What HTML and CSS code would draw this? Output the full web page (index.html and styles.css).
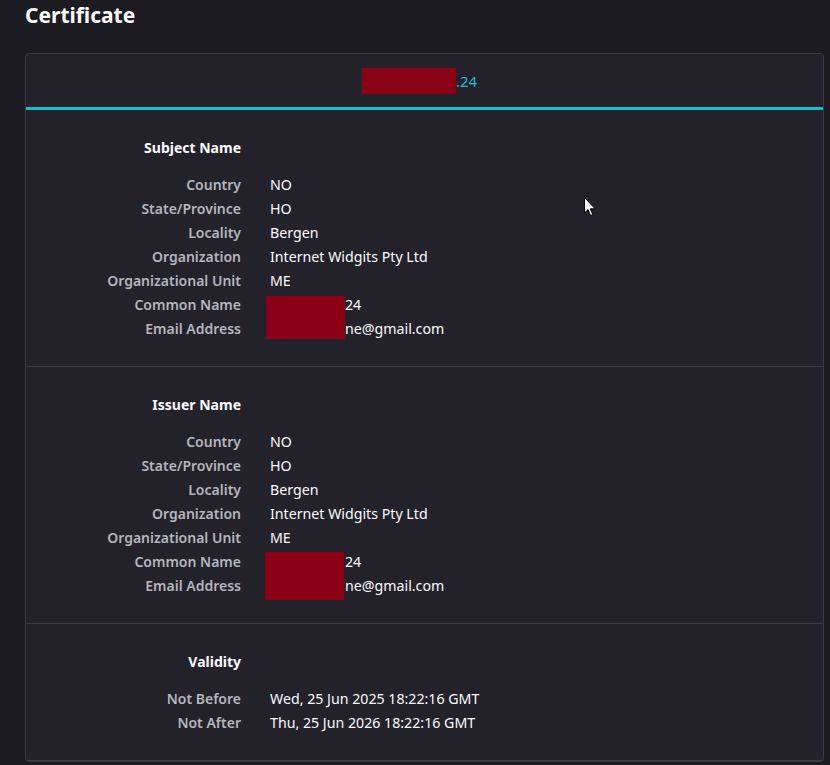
FILE: index.html
```html
<!DOCTYPE html>
<html lang="en">
<head>
<meta charset="utf-8">
<title>Certificate</title>
<link rel="stylesheet" href="styles.css">
</head>
<body>
<h1 class="title">Certificate</h1>
<div class="card">
  <div class="card-header">
    <span class="tab"><span class="redact-inline"></span>.24</span>
  </div>

  <section class="section">
    <h2 class="sec-title">Subject Name</h2>
    <div class="rows">
      <div class="label">Country</div><div class="value">NO</div>
      <div class="label">State/Province</div><div class="value">HO</div>
      <div class="label">Locality</div><div class="value">Bergen</div>
      <div class="label">Organization</div><div class="value">Internet Widgits Pty Ltd</div>
      <div class="label">Organizational Unit</div><div class="value">ME</div>
      <div class="label">Common Name</div><div class="value redacted-val"><span class="hidden-part"></span>24<span class="redact-box"></span></div>
      <div class="label">Email Address</div><div class="value"><span class="hidden-part"></span>ne@gmail.com</div>
    </div>
  </section>

  <section class="section">
    <h2 class="sec-title">Issuer Name</h2>
    <div class="rows">
      <div class="label">Country</div><div class="value">NO</div>
      <div class="label">State/Province</div><div class="value">HO</div>
      <div class="label">Locality</div><div class="value">Bergen</div>
      <div class="label">Organization</div><div class="value">Internet Widgits Pty Ltd</div>
      <div class="label">Organizational Unit</div><div class="value">ME</div>
      <div class="label">Common Name</div><div class="value redacted-val"><span class="hidden-part"></span>24<span class="redact-box tall"></span></div>
      <div class="label">Email Address</div><div class="value"><span class="hidden-part"></span>ne@gmail.com</div>
    </div>
  </section>

  <section class="section">
    <h2 class="sec-title">Validity</h2>
    <div class="rows">
      <div class="label">Not Before</div><div class="value">Wed, 25 Jun 2025 18:22:16 GMT</div>
      <div class="label">Not After</div><div class="value">Thu, 25 Jun 2026 18:22:16 GMT</div>
    </div>
  </section>
</div>

<svg class="cursor" width="13" height="20" viewBox="0 0 13 20" aria-hidden="true">
  <path d="M0.5 0.5 L0.5 16 L4 12.6 L6.6 18.6 L8.8 17.6 L6.3 11.8 L11.2 11.8 Z" fill="#ffffff" stroke="#000000" stroke-width="1"/>
</svg>
</body>
</html>
```

FILE: styles.css
```css
html, body {
  margin: 0;
  padding: 0;
  background: #1c1b22;
}
body {
  font-family: "Noto Sans", "Open Sans", sans-serif;
  color: #fbfbfe;
  padding: 0 6px 0 25px;
  height: 765px;
  overflow: hidden;
  position: relative;
}
.title {
  margin: 0;
  padding-top: 1px;
  font-size: 21px;
  line-height: 28px;
  font-weight: 700;
  height: 52px;
}
.card {
  background: #23222b;
  border: 1px solid #3a3944;
  border-radius: 4px;
}
.card-header {
  height: 53px;
  border-bottom: 3px solid #1cbcd0;
  display: flex;
  justify-content: center;
  align-items: center;
}
.tab {
  color: #1cbcd0;
  font-size: 15px;
  display: flex;
  align-items: center;
  margin-left: -10px;
}
.redact-inline {
  display: inline-block;
  width: 94px;
  height: 26px;
  background: #8a0015;
}
.section {
  border-bottom: 1px solid #3a3944;
  padding: 28px 0 25px;
}
.sec-title {
  margin: 0 0 15px;
  width: 215px;
  text-align: right;
  font-size: 14px;
  font-weight: 700;
  line-height: 20px;
}
.rows {
  display: grid;
  grid-template-columns: 215px 1fr;
  column-gap: 29px;
  font-size: 14px;
  line-height: 24px;
}
.label {
  text-align: right;
  color: #b5b5bd;
  font-weight: 600;
}
.value {
  color: #fbfbfe;
  font-size: 14.2px;
}
.redacted-val {
  position: relative;
}
.hidden-part {
  display: inline-block;
  width: 75px;
}
.redact-box {
  position: absolute;
  left: -4px;
  top: 3px;
  width: 79px;
  height: 43px;
  background: #8a0015;
}
.redact-box.tall {
  left: -5px;
  top: 2px;
  height: 48px;
}
.cursor {
  position: absolute;
  left: 584px;
  top: 197px;
}
```
